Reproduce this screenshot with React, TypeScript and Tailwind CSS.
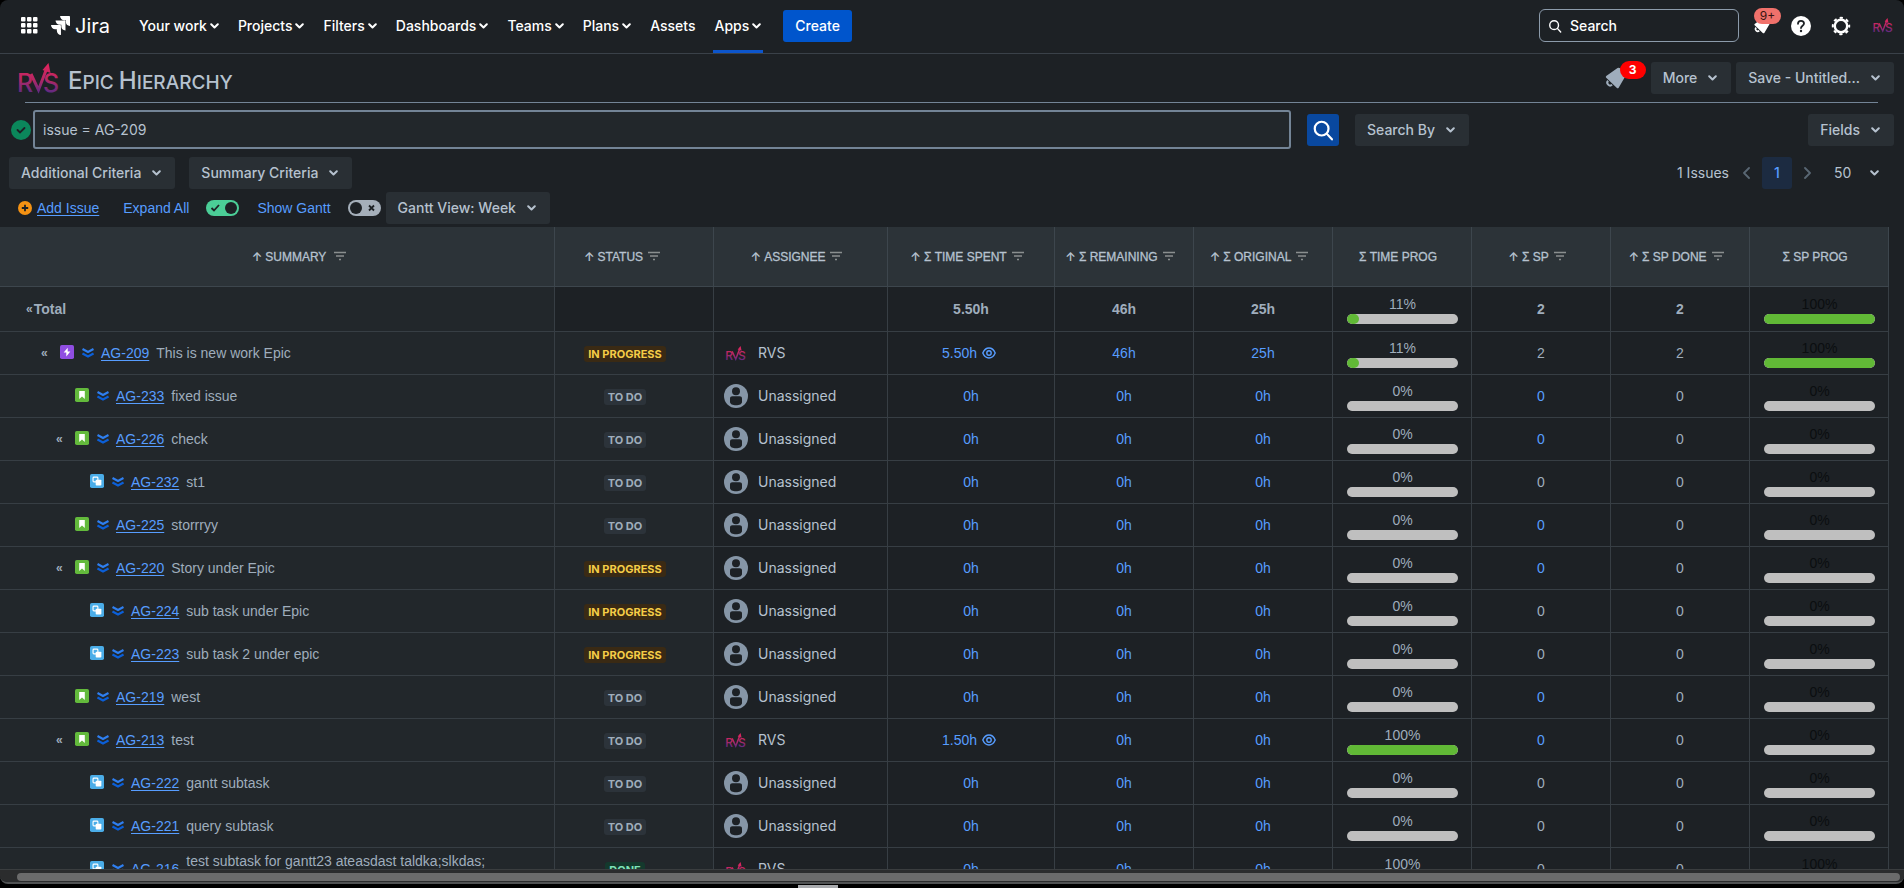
import { useState } from "react";
import type { ReactNode } from "react";
import clsx from "clsx";

type IssueType = "epic" | "story" | "subtask";
type Status = "IN PROGRESS" | "TO DO" | "DONE";

interface Issue {
  key: string;
  summary: string;
  type: IssueType;
  level: 1 | 2 | 3;
  expandable?: boolean;
  status: Status;
  assignee?: string;
  spent: string;
  remaining: string;
  original: string;
  timeProgress: number;
  sp: number;
  spDone: number;
  spProgress: number;
}

const empty = {
  spent: "0h",
  remaining: "0h",
  original: "0h",
  timeProgress: 0,
  sp: 0,
  spDone: 0,
  spProgress: 0,
};

const issues: Issue[] = [
  {
    key: "AG-209", summary: "This is new work Epic", type: "epic", level: 1, expandable: true,
    status: "IN PROGRESS", assignee: "RVS", spent: "5.50h", remaining: "46h", original: "25h",
    timeProgress: 11, sp: 2, spDone: 2, spProgress: 100,
  },
  { ...empty, key: "AG-233", summary: "fixed issue", type: "story", level: 2, status: "TO DO" },
  { ...empty, key: "AG-226", summary: "check", type: "story", level: 2, expandable: true, status: "TO DO" },
  { ...empty, key: "AG-232", summary: "st1", type: "subtask", level: 3, status: "TO DO" },
  { ...empty, key: "AG-225", summary: "storrryy", type: "story", level: 2, status: "TO DO" },
  { ...empty, key: "AG-220", summary: "Story under Epic", type: "story", level: 2, expandable: true, status: "IN PROGRESS" },
  { ...empty, key: "AG-224", summary: "sub task under Epic", type: "subtask", level: 3, status: "IN PROGRESS" },
  { ...empty, key: "AG-223", summary: "sub task 2 under epic", type: "subtask", level: 3, status: "IN PROGRESS" },
  { ...empty, key: "AG-219", summary: "west", type: "story", level: 2, status: "TO DO" },
  {
    ...empty, key: "AG-213", summary: "test", type: "story", level: 2, expandable: true,
    status: "TO DO", assignee: "RVS", spent: "1.50h", timeProgress: 100,
  },
  { ...empty, key: "AG-222", summary: "gantt subtask", type: "subtask", level: 3, status: "TO DO" },
  { ...empty, key: "AG-221", summary: "query subtask", type: "subtask", level: 3, status: "TO DO" },
  {
    ...empty, key: "AG-216", summary: "test subtask for gantt23 ateasdast taldka;slkdas;", type: "subtask", level: 3,
    status: "DONE", assignee: "RVS", timeProgress: 100, spProgress: 100,
  },
];

const navItems = ["Your work", "Projects", "Filters", "Dashboards", "Teams", "Plans", "Assets", "Apps"];

const indents = { 1: "pl-[41px]", 2: "pl-[56px]", 3: "pl-[71px]" };

const statusStyles: Record<Status, string> = {
  "IN PROGRESS": "bg-[#3a2a14] text-[#f5cd47]",
  "TO DO": "bg-[#2c333a] text-[#9fadbc]",
  DONE: "bg-[#14392d] text-[#7ee2b8]",
};

const Chevron = () => (
  <svg viewBox="0 0 9 6" className="w-[9px] h-[6px] shrink-0" fill="none" stroke="currentColor" strokeWidth="2" strokeLinecap="round" strokeLinejoin="round" aria-hidden="true">
    <path d="M1.200 1.200 4.500 4.500 7.800 1.200" />
  </svg>
);

const PageArrow = ({ next }: { next?: boolean }) => (
  <svg viewBox="0 0 7 12" className="w-[7px] h-3" fill="none" stroke="currentColor" strokeWidth="1.800" strokeLinecap="round" strokeLinejoin="round" aria-hidden="true">
    <path d={next ? "M1 1l5 5-5 5" : "M6 1 1 6l5 5"} />
  </svg>
);

const RvsLogo = ({ className }: { className?: string }) => (
  <svg viewBox="0 0 42 31" className={clsx("overflow-visible", className)} aria-hidden="true">
    <defs>
      <linearGradient id="rvs" x1="0" y1="2" x2="0" y2="31" gradientUnits="userSpaceOnUse">
        <stop offset="0" stopColor="#e0245e" />
        <stop offset="0.5" stopColor="#b52865" />
        <stop offset="1" stopColor="#552a86" />
      </linearGradient>
    </defs>
    <g fill="url(#rvs)" fontFamily="Inter, sans-serif" fontSize="25" fontWeight="500">
      <text x="-1" y="29">R</text>
      <text x="25" y="29">S</text>
    </g>
    <path d="M13 11 20.500 27 28.500 6" fill="none" stroke="url(#rvs)" strokeWidth="3" />
    <path d="M30.500 0 32.500 10 24.500 7Z" fill="url(#rvs)" />
  </svg>
);

const Megaphone = ({ className }: { className?: string }) => (
  <svg viewBox="0 0 24 24" className={className} fill="currentColor" aria-hidden="true">
    <path d="M14 1.500c1-1 3-.8 4 .2l5 6c.8 1 .6 2.400-.2 3.300L16 22.500c-.6.800-1.600.700-2.200 0L2.400 11.800c-.7-.7-.5-1.700.4-2.200z" />
    <path d="M4.500 15a3 3 0 0 0 4.300 4.200" fill="none" stroke="currentColor" strokeWidth="2.200" />
  </svg>
);

const SearchIcon = ({ className }: { className?: string }) => (
  <svg viewBox="0 0 16 16" className={className} fill="none" stroke="currentColor" strokeWidth="1.600" strokeLinecap="round" aria-hidden="true">
    <circle cx="7" cy="7" r="5" />
    <path d="m11 11 3.500 3.800" />
  </svg>
);

const FilterIcon = () => (
  <svg viewBox="0 0 12 12" className="w-3 h-3 shrink-0" stroke="#8a8f8f" strokeWidth="1.500" aria-hidden="true">
    <path d="M0 1.500h12M2 5h8M5 8.500h2" />
  </svg>
);

const TypeIcon = ({ type }: { type: IssueType }) => (
  <svg viewBox="0 0 16 16" className="w-[14px] h-[14px] shrink-0 -translate-y-px" role="img" aria-label={type}>
    <rect width="16" height="16" rx="2" fill={type === "epic" ? "#904ee2" : type === "story" ? "#63ba3c" : "#4bade8"} />
    {type === "epic" && <path d="M8.800 3 4.200 8.600h3v4.600L11.800 7.400h-3z" fill="#fff" />}
    {type === "story" && <path d="M4.800 3.500h6.400v9L8 9.600l-3.200 2.900z" fill="#fff" />}
    {type === "subtask" && (
      <>
        <rect x="3.500" y="3.500" width="5.500" height="5.500" rx="1" fill="none" stroke="#fff" strokeWidth="1.300" />
        <rect x="6.500" y="6.500" width="6.500" height="6.500" rx="1" fill="#fff" />
      </>
    )}
  </svg>
);

const PriorityIcon = () => (
  <svg viewBox="0 0 12 10" className="ml-2 w-3 h-[10px] shrink-0" fill="none" strokeWidth="2.200" aria-hidden="true">
    <path d="M.5 1 6 4l5.500-3" stroke="#2f7ff0" />
    <path d="M.5 5.400 6 8.400l5.500-3" stroke="#0b5fd8" />
  </svg>
);

const EyeIcon = () => (
  <svg viewBox="0 0 14 12" className="w-[14px] h-3" fill="none" stroke="currentColor" strokeWidth="1.400" aria-hidden="true">
    <path d="M.8 6C2.200 2.700 4.400 1 7 1s4.800 1.700 6.200 5C11.800 9.300 9.600 11 7 11S2.200 9.300.8 6z" />
    <circle cx="7" cy="6" r="2.200" />
  </svg>
);

const UserAvatar = () => (
  <svg viewBox="0 0 24 24" className="w-6 h-6" aria-hidden="true">
    <circle cx="12" cy="12" r="12" fill="#8696a7" />
    <circle cx="12" cy="7.200" r="4" fill="#1d2125" />
    <path d="M6 14.500c0-1.400 1-2.300 2.300-2.300h7.400c1.300 0 2.300.9 2.300 2.300V18c0 2-2.700 3.300-6 3.300S6 20 6 18z" fill="#1d2125" />
  </svg>
);

const MenuButton = ({ children }: { children: ReactNode }) => (
  <button type="button" className="h-8 shrink-0 flex items-center gap-[11px] rounded-[3px] bg-[#292f34] pl-3 pr-[14px] font-medium whitespace-nowrap">
    {children}
    <Chevron />
  </button>
);

const Toggle = ({ label, defaultChecked }: { label: string; defaultChecked?: boolean }) => {
  const [on, setOn] = useState(!!defaultChecked);

  return (
    <label className="flex items-center gap-[17px] text-[#579dff]">
      {label}
      <span className="relative w-[33px] h-4">
        <input
          type="checkbox"
          checked={on}
          onChange={() => setOn(!on)}
          className="block w-full h-full appearance-none rounded-full bg-[#a5afba] checked:bg-[#4bce97]"
        />
        <svg viewBox="0 0 33 16" className="absolute inset-0 pointer-events-none" fill="none" stroke="#1d2125" strokeWidth="1.800" aria-hidden="true">
          <circle cx={on ? 25 : 8} cy="8" r="6" fill="#1d2125" stroke="none" />
          <path d={on ? "m5.500 8 2.500 2.500L13 5" : "m21 5.500 5 5m0-5-5 5"} />
        </svg>
      </span>
    </label>
  );
};

const Progress = ({ value, dim }: { value: number; dim?: boolean }) => (
  <div className="pl-[14px] pr-[13px]">
    <div className={clsx("text-center leading-5", dim && "text-[#0b0e10]")}>{value}%</div>
    <div className="h-[10px] rounded-full bg-[#bfbfbf] overflow-hidden">
      <div className="h-full rounded-full bg-[#61b936]" style={{ width: `${value}%` }} />
    </div>
  </div>
);

const HeaderCell = ({ children, plain, className }: { children: ReactNode; plain?: boolean; className?: string }) => (
  <th scope="col" className="h-[60px] border-r border-b border-[#3d464d] bg-[#2c3338] p-0 font-normal text-xs whitespace-nowrap">
    <div className={clsx("flex items-center justify-center", className ?? "gap-[5px] pr-2")}>
      <span>
        {!plain && <span className="font-[Inter] font-semibold">↑ </span>}
        <span className="[-webkit-text-stroke:0.3px]">{children}</span>
      </span>
      {!plain && <FilterIcon />}
    </div>
  </th>
);

const cell = "h-[43px] border-r border-b border-[#373e44] p-0 text-center";
const link = "text-[#579dff]";

const IssueRow = ({ issue }: { issue: Issue }) => (
  <tr>
    <td className={clsx(cell, "bg-[#22272b] text-left")}>
      <div className={clsx("flex items-center", indents[issue.level])}>
        <span className="w-[19px] shrink-0 text-xs font-bold">
          {issue.expandable && <button type="button">«</button>}
        </span>
        <TypeIcon type={issue.type} />
        <PriorityIcon />
        <a href="#" className={clsx(link, "mx-[7px] underline underline-offset-2")}>{issue.key}</a>
        <span className={clsx("whitespace-nowrap", issue.summary.length > 40 && "pb-4")}>{issue.summary}</span>
      </div>
    </td>
    <td className={clsx(cell, "bg-[#22272b] pr-[18px]")}>
      <span className={clsx("inline-block rounded-[3px] px-1 text-[11px] leading-4 font-bold font-[Inter] align-middle", statusStyles[issue.status])}>
        {issue.status}
      </span>
    </td>
    <td className={cell}>
      <div className="flex items-center gap-[10px] pl-[10px] font-[Inter] text-[#b6c2cf]">
        {issue.assignee ? <RvsLogo className="w-6 h-[15px]" /> : <UserAvatar />}
        {issue.assignee ?? "Unassigned"}
      </div>
    </td>
    <td className={cell}>
      {issue.spent === "0h" ? (
        <a href="#" className={link}>{issue.spent}</a>
      ) : (
        <a href="#" className={clsx(link, "inline-flex items-center gap-[5px] pr-1")}>
          {issue.spent}
          <EyeIcon />
        </a>
      )}
    </td>
    <td className={cell}><a href="#" className={link}>{issue.remaining}</a></td>
    <td className={cell}><a href="#" className={link}>{issue.original}</a></td>
    <td className={cell}><Progress value={issue.timeProgress} /></td>
    <td className={cell}>
      {issue.type === "story" ? <a href="#" className={link}>{issue.sp}</a> : issue.sp}
    </td>
    <td className={cell}>{issue.spDone}</td>
    <td className={cell}><Progress value={issue.spProgress} dim /></td>
  </tr>
);

const TopNav = () => (
  <header className="h-[54px] shrink-0 flex items-center border-b border-[#3a4149] pl-[21px] pr-[11px] pb-[2px] font-[Inter] font-medium text-white">
    <button type="button" aria-label="Switch to">
      <svg viewBox="0 0 17 17" className="w-[17px] h-[17px]" fill="currentColor">
        {[0, 6, 12].map((y) => [0, 6, 12].map((x) => <rect key={`${x}-${y}`} x={x} y={y} width="4.500" height="4.500" rx="1" />))}
      </svg>
    </button>
    <a href="#" className="ml-[13px] mr-[27px] flex items-center gap-[5px] text-xl font-normal">
      <svg viewBox="0 0 24 24" className="w-[19px] h-[19px]" fill="currentColor" aria-hidden="true">
        <path d="M11.571 11.513H0a5.218 5.218 0 0 0 5.232 5.215h2.130v2.057A5.215 5.215 0 0 0 12.575 24V12.518a1.005 1.005 0 0 0-1.005-1.005zm5.723-5.756H5.736a5.215 5.215 0 0 0 5.215 5.214h2.129v2.058a5.218 5.218 0 0 0 5.215 5.214V6.758a1.001 1.001 0 0 0-1.001-1.001zM23.013 0H11.455a5.215 5.215 0 0 0 5.215 5.215h2.129v2.057A5.215 5.215 0 0 0 24 12.483V1.005A1.001 1.001 0 0 0 23.013 0z" />
      </svg>
      Jira
    </a>
    <nav className="self-stretch -mb-[2px] flex gap-[15px]">
      {navItems.map((item) => (
        <button
          key={item}
          type="button"
          className={clsx("px-[2px] pb-[2px] flex items-center gap-[3px] border-y-[3px] border-transparent whitespace-nowrap", item === "Apps" && "border-b-[#0c55cc]")}
        >
          {item}
          {item !== "Assets" && <Chevron />}
        </button>
      ))}
    </nav>
    <button type="button" className="ml-5 h-8 rounded-[3px] bg-[#0055cc] px-3">Create</button>

    <label className="ml-auto w-[200px] h-[33px] flex items-center gap-2 rounded-[6px] border border-[#8c9bab] px-2">
      <SearchIcon className="w-[14px] h-[14px] shrink-0" />
      <input type="text" placeholder="Search" aria-label="Search" className="w-full bg-transparent outline-none placeholder:text-white" />
    </label>
    <button type="button" aria-label="Notifications" className="relative ml-[14px]">
      <Megaphone className="w-[17px] h-[17px]" />
      <span className="absolute left-px -top-[9px] w-[27px] rounded-full bg-[#f0716b] text-center text-xs leading-4 font-normal text-[#3a1512]">9+</span>
    </button>
    <button type="button" aria-label="Help" className="ml-[21px]">
      <svg viewBox="0 0 20 20" className="w-5 h-5" aria-hidden="true">
        <circle cx="10" cy="10" r="10" fill="#fff" />
        <path d="M7 7.800c0-1.800 1.300-3 3-3s3 1.100 3 2.700c0 2.200-3 2.300-3 4.600" fill="none" stroke="#1d2125" strokeWidth="1.800" strokeLinecap="round" />
        <circle cx="10" cy="15" r="1.200" fill="#1d2125" />
      </svg>
    </button>
    <button type="button" aria-label="Settings" className="ml-5">
      <svg viewBox="0 0 20 20" className="w-5 h-5" fill="none" stroke="#fff" aria-hidden="true">
        <circle cx="10" cy="10" r="6.200" strokeWidth="2.400" />
        <circle cx="10" cy="10" r="8.200" strokeWidth="2" strokeDasharray="3.200 3.240" strokeDashoffset="1.600" />
      </svg>
    </button>
    <button type="button" aria-label="Your profile" className="ml-[22px]">
      <RvsLogo className="w-5 h-[15px]" />
    </button>
  </header>
);

const App = () => {
  const [query, setQuery] = useState("issue = AG-209");

  return (
    <div className="h-screen flex flex-col overflow-hidden bg-black font-['Liberation_Sans',Arial,sans-serif] text-sm text-[#9fadbc]">
      <div className="flex-1 min-h-0 flex flex-col overflow-hidden rounded-[8px] border-b-2 border-[#505253] bg-[#1d2125]">
        <TopNav />

        <div className="font-[Inter] text-[#b6c2cf]">
          <div className="mt-2 h-8 flex items-center pl-[18px] pr-[10px]">
            <RvsLogo className="w-[42px] h-[31px]" />
            <h1 className="ml-2 pt-2 text-[19px] leading-7 font-medium uppercase whitespace-nowrap">
              <span className="text-2xl leading-7">E</span>pic <span className="text-2xl leading-7">H</span>ierarchy
            </h1>
            <button type="button" aria-label="Announcements" className="relative ml-auto mr-[25px] text-[#9fadbc]">
              <Megaphone className="w-[22px] h-[22px]" />
              <span className="absolute left-4 -top-[6px] w-[26px] rounded-full bg-[#ff0000] text-center text-xs leading-[18px] font-bold text-white">3</span>
            </button>
            <div className="flex gap-[5px]">
              <MenuButton>More</MenuButton>
              <MenuButton>Save - Untitled...</MenuButton>
            </div>
          </div>
          <hr className="mt-2 ml-[25px] mr-[26px] border-[#738496]" />

          <div className="mt-[7px] flex items-center pl-[11px] pr-[10px]">
            <svg viewBox="0 0 20 20" className="w-5 h-5 shrink-0" role="img" aria-label="Valid query">
              <circle cx="10" cy="10" r="10" fill="#0b875b" />
              <path d="m6.500 10 2.500 2.500L13.500 8" fill="none" stroke="#1d2125" strokeWidth="1.800" strokeLinecap="round" />
            </svg>
            <input
              type="text"
              aria-label="JQL query"
              value={query}
              onChange={(e) => setQuery(e.target.value)}
              className="ml-[2px] h-[39px] w-[1258px] min-w-0 rounded-[3px] border-2 border-[#738496] bg-[#22272b] px-2 outline-none"
            />
            <button type="button" aria-label="Run search" className="ml-4 w-8 h-8 shrink-0 flex items-center justify-center rounded-[3px] bg-[#09489f] text-white">
              <SearchIcon className="w-[22px] h-[22px]" />
            </button>
            <div className="ml-4 flex-1 flex justify-between">
              <MenuButton>Search By</MenuButton>
              <MenuButton>Fields</MenuButton>
            </div>
          </div>

          <div className="mt-2 flex items-center pl-[9px] pr-[25px]">
            <div className="flex gap-[14px]">
              <MenuButton>Additional Criteria</MenuButton>
              <MenuButton>Summary Criteria</MenuButton>
            </div>
            <span className="ml-auto">1 Issues</span>
            <div className="ml-[14px] flex items-center gap-3">
              <button type="button" aria-label="Previous page" className="text-[#596773]">
                <PageArrow />
              </button>
              <button type="button" className="w-[30px] h-8 rounded-[3px] bg-[#1c2b41] font-medium text-[#579dff]">1</button>
              <button type="button" aria-label="Next page" className="text-[#596773]">
                <PageArrow next />
              </button>
            </div>
            <label className="ml-[23px] flex items-center">
              <select aria-label="Issues per page" className="w-9 appearance-none bg-transparent outline-none">
                <option>50</option>
              </select>
              <Chevron />
            </label>
          </div>
        </div>

        <div className="mt-[3px] flex items-center pl-[18px]">
          <a href="#" className={clsx(link, "flex items-center gap-[5px] underline underline-offset-2")}>
            <svg viewBox="0 0 14 14" className="w-[14px] h-[14px]" aria-hidden="true">
              <circle cx="7" cy="7" r="7" fill="#f59213" />
              <path d="M7 3.800v6.400M3.800 7h6.400" stroke="#1d2125" strokeWidth="1.800" />
            </svg>
            Add Issue
          </a>
          <div className="ml-6 flex gap-[18px]">
            <Toggle label="Expand All" defaultChecked />
            <Toggle label="Show Gantt" />
          </div>
          <div className="ml-[5px] font-[Inter] text-[#b6c2cf]">
            <MenuButton>Gantt View: Week</MenuButton>
          </div>
        </div>

        <div className="mt-[3px] mr-[15px] flex-1 min-h-0 overflow-hidden">
          <table className="w-full table-fixed border-separate border-spacing-0">
            <colgroup>
              <col />
              <col className="w-[159px]" />
              <col className="w-[174px]" />
              <col className="w-[167px]" />
              <col className="w-[139px]" />
              <col className="w-[139px]" />
              <col className="w-[139px]" />
              <col className="w-[139px]" />
              <col className="w-[139px]" />
              <col className="w-[139px]" />
            </colgroup>
            <thead className="text-[#b6c2cf]">
              <tr>
                <HeaderCell className="gap-2 pl-11">SUMMARY</HeaderCell>
                <HeaderCell className="gap-[5px] pr-6">STATUS</HeaderCell>
                <HeaderCell>ASSIGNEE</HeaderCell>
                <HeaderCell>Σ TIME SPENT</HeaderCell>
                <HeaderCell>Σ REMAINING</HeaderCell>
                <HeaderCell>Σ ORIGINAL</HeaderCell>
                <HeaderCell plain>Σ TIME PROG</HeaderCell>
                <HeaderCell>Σ SP</HeaderCell>
                <HeaderCell>Σ SP DONE</HeaderCell>
                <HeaderCell plain>Σ SP PROG</HeaderCell>
              </tr>
            </thead>
            <tbody>
              <tr className="font-bold">
                <td className={clsx(cell, "h-[45px] bg-[#22272b] text-left")}>
                  <div className="flex items-center gap-px pl-[26px]">
                    <button type="button" className="text-xs">«</button>
                    Total
                  </div>
                </td>
                <td className={cell} />
                <td className={cell} />
                <td className={cell}>5.50h</td>
                <td className={cell}>46h</td>
                <td className={cell}>25h</td>
                <td className={clsx(cell, "font-normal")}><Progress value={11} /></td>
                <td className={cell}>2</td>
                <td className={cell}>2</td>
                <td className={clsx(cell, "font-normal")}><Progress value={100} dim /></td>
              </tr>
              {issues.map((issue) => (
                <IssueRow key={issue.key} issue={issue} />
              ))}
            </tbody>
          </table>
        </div>

        {/* horizontal scrollbar */}
        <div className="h-[13px] shrink-0 border-t border-[#3a3d3f] bg-[#2b2c2d] pl-[17px] pr-1 pt-[3px]">
          <div className="h-2 rounded-full bg-[#6b6b6b]" />
        </div>
      </div>
      <div className="h-1 shrink-0 flex items-end pl-[798px]">
        <div className="w-10 h-[3px] bg-[#a9abae]" />
      </div>
    </div>
  );
};

export default App;
